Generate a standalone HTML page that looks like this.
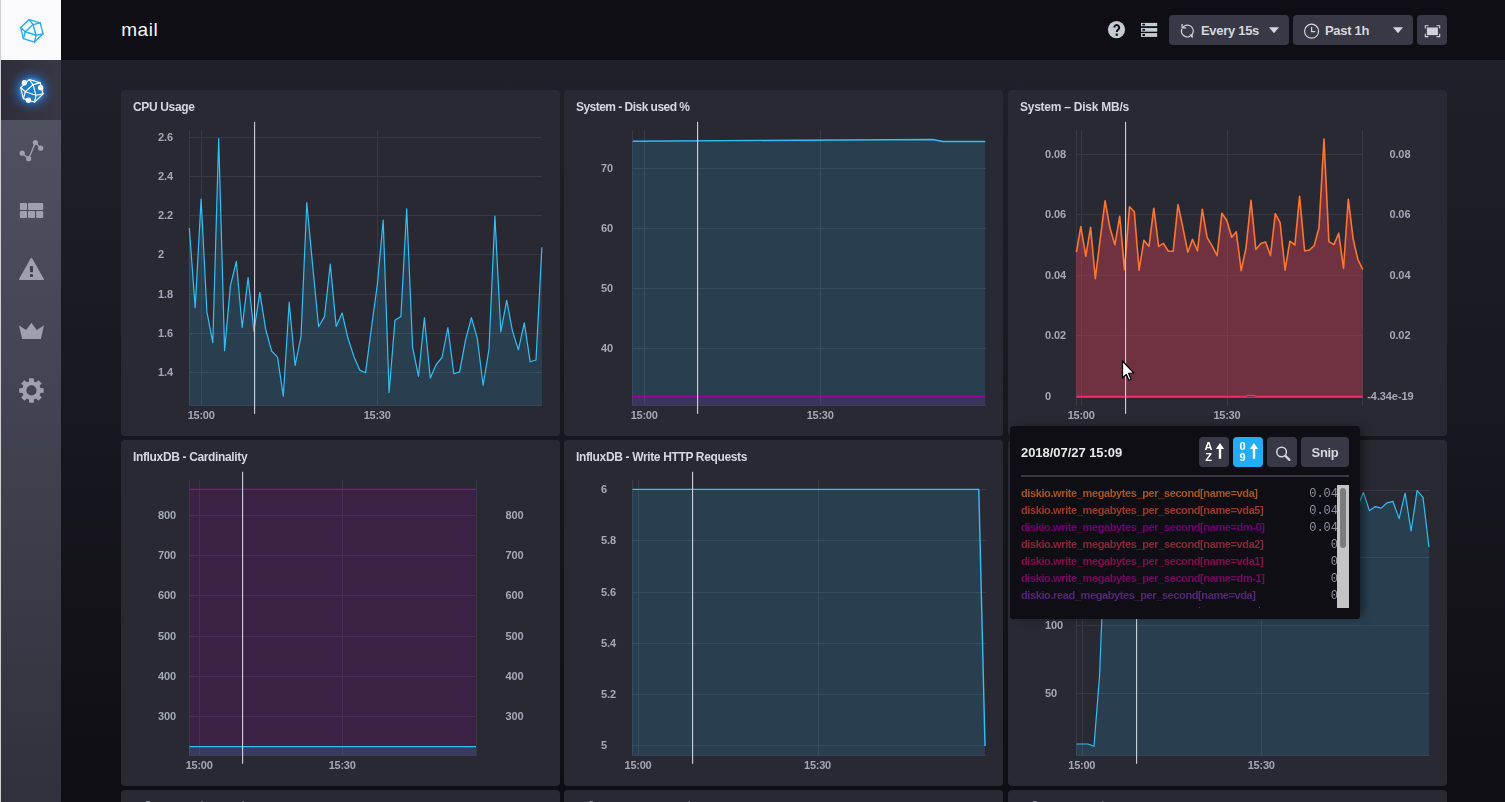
<!DOCTYPE html>
<html><head><meta charset="utf-8"><title>mail</title>
<style>
*{box-sizing:border-box;margin:0;padding:0}
html,body{width:1505px;height:802px;overflow:hidden;background:#0f0e15}
body{font-family:"Liberation Sans",sans-serif;color:#a4a8b6;-webkit-font-smoothing:antialiased}
#app{position:relative;width:1505px;height:802px;overflow:hidden;
  background:linear-gradient(to bottom,#202028 60px,#0f0e15 802px)}
.abs{position:absolute}
#winborder{position:absolute;left:0;top:0;width:1px;height:802px;background:#cfcfd2;z-index:50}
#header{position:absolute;left:61px;top:0;width:1444px;height:60px;background:#0f0e15}
#title{position:absolute;left:121.2px;top:17.6px;font-size:19px;line-height:24px;color:#f6f6f8;font-weight:400;white-space:nowrap;letter-spacing:0.55px}
#sidebar{position:absolute;left:1px;top:0;width:60px;height:802px;
  background:linear-gradient(to bottom,#545667 0px,#31313d 802px)}
#logo{position:absolute;left:0;top:0;width:60px;height:60px;background:#fafafc}
#active{position:absolute;left:0;top:60px;width:60px;height:60px;
  background:linear-gradient(to right,#2e2e3a,#393946)}
.sicon{position:absolute;left:0;width:60px;height:60px}
.btn{position:absolute;top:15px;height:30px;border-radius:4px;background:#383846;color:#d4d7dd;
  font-weight:700;font-size:13px;line-height:31.8px;white-space:nowrap}
.panel{position:absolute;background:#292933;border-radius:4px;overflow:hidden}
.ptitle{will-change:transform;position:absolute;left:12px;top:9px;font-size:12px;line-height:16px;font-weight:700;color:#d4d7dd;white-space:nowrap;letter-spacing:-0.35px}
.yl{position:absolute;font-size:11px;line-height:12px;font-weight:700;color:#a4a8b6;white-space:nowrap;letter-spacing:-0.1px}
.xl{position:absolute;font-size:11px;line-height:12px;font-weight:700;color:#a4a8b6;white-space:nowrap;transform:translateX(-50%);letter-spacing:-0.25px}
svg{position:absolute;left:0;top:0;overflow:visible}
#tip{position:absolute;left:1010px;top:426px;width:350px;height:193px;background:#0f0e15;border-radius:4px;
  box-shadow:6px 0 10px -4px rgba(0,0,0,.6);z-index:20;overflow:hidden}
#tip .ts{position:absolute;left:11px;top:19.3px;font-size:13px;line-height:16px;font-weight:700;color:#e7e8eb;white-space:nowrap;letter-spacing:-0.05px}
#tip .tb{position:absolute;top:11px;width:30px;height:30px;border-radius:4px;background:#383846}
#tip .hr{position:absolute;left:11px;top:49px;width:328px;height:2px;background:#383846}
#tip .row{position:absolute;left:11px;font-size:11px;line-height:17px;margin-top:0.8px;font-weight:700;white-space:nowrap;letter-spacing:-0.39px}
#tip .val{position:absolute;font-family:"Liberation Mono",monospace;font-size:12px;line-height:17px;color:#8e91a1;white-space:nowrap;text-align:right}

</style></head>
<body>
<div id="app">
<div id="sidebar"><div id="logo"></div><div id="active"></div><svg width="60" height="802" viewBox="1 0 60 802"><defs><radialGradient id="glow" cx="50%" cy="50%" r="50%"><stop offset="0" stop-color="#2a8fe0" stop-opacity="1"/><stop offset="0.47" stop-color="#2b8ade" stop-opacity="0.95"/><stop offset="0.57" stop-color="#2c64a6" stop-opacity="0.8"/><stop offset="0.75" stop-color="#2d4c7c" stop-opacity="0.5"/><stop offset="1" stop-color="#2d4470" stop-opacity="0"/></radialGradient></defs><g fill="none" stroke="#22adf6" stroke-width="1.4" stroke-linejoin="round" stroke-linecap="round"><polygon points="29.20,19.56 40.21,22.83 43.07,33.84 34.55,42.06 23.36,38.61 20.73,27.59" fill="none"/><polyline points="20.73,27.59 25.31,31.75 33.05,24.59 29.20,19.56"/><polyline points="33.05,24.59 40.21,22.83"/><polyline points="33.05,24.59 36.01,35.28 25.31,31.75"/><polyline points="43.07,33.84 36.01,35.28 34.55,42.06"/><polyline points="25.31,31.75 23.36,38.61"/></g><circle cx="31.5" cy="90.3" r="23.5" fill="url(#glow)"/><g fill="none" stroke="#ffffff" stroke-width="1.15" stroke-linejoin="round" stroke-linecap="round"><polygon points="29.20,79.56 40.21,82.83 43.07,93.84 34.55,102.06 23.36,98.61 20.73,87.59" fill="#1f7fc6"/><polyline points="20.73,87.59 25.31,91.75 33.05,84.59 29.20,79.56"/><polyline points="33.05,84.59 40.21,82.83"/><polyline points="33.05,84.59 36.01,95.28 25.31,91.75"/><polyline points="43.07,93.84 36.01,95.28 34.55,102.06"/><polyline points="25.31,91.75 23.36,98.61"/></g><circle cx="24.4" cy="82.8" r="2.7" fill="#fff"/><circle cx="40.6" cy="87.8" r="2.7" fill="#fff"/><circle cx="28.4" cy="100.2" r="2.7" fill="#fff"/><polyline points="22.2,153.2 28.7,158.7 35.4,142.5 40.7,148.2" fill="none" stroke="#9da0ae" stroke-width="1.4"/><circle cx="22.2" cy="153.2" r="2.6" fill="#9da0ae"/><circle cx="28.7" cy="158.7" r="2.6" fill="#9da0ae"/><circle cx="35.4" cy="142.5" r="2.6" fill="#9da0ae"/><circle cx="40.7" cy="148.2" r="2.6" fill="#9da0ae"/><rect x="19.9" y="202.9" width="7.10" height="7.05" rx="0.9" fill="#9da0ae"/><rect x="28.0" y="202.9" width="15.20" height="7.05" rx="0.9" fill="#9da0ae"/><rect x="19.9" y="211.0" width="7.10" height="7.00" rx="0.9" fill="#9da0ae"/><rect x="28.0" y="211.0" width="7.00" height="7.00" rx="0.9" fill="#9da0ae"/><rect x="36.1" y="211.0" width="7.10" height="7.00" rx="0.9" fill="#9da0ae"/><path d="M31.45 258.6 L43.2 279.3 L19.7 279.3 Z" fill="#9da0ae" stroke="#9da0ae" stroke-width="1.6" stroke-linejoin="round"/><rect x="29.95" y="266.1" width="3" height="6.1" fill="#3c3d4e"/><rect x="29.95" y="274.2" width="3" height="2.7" fill="#3c3d4e"/><polygon points="19.0,325.5 26.2,329.9 31.45,322.7 36.7,329.9 43.9,325.5 40.9,338.9 22.2,338.9" fill="#9da0ae"/><path d="M28.96 381.49 L29.19 378.26 L33.71 378.26 L33.94 381.49 L36.03 382.36 L38.47 380.23 L41.67 383.43 L39.54 385.87 L40.41 387.96 L43.64 388.19 L43.64 392.71 L40.41 392.94 L39.54 395.03 L41.67 397.47 L38.47 400.67 L36.03 398.54 L33.94 399.41 L33.71 402.64 L29.19 402.64 L28.96 399.41 L26.87 398.54 L24.43 400.67 L21.23 397.47 L23.36 395.03 L22.49 392.94 L19.26 392.71 L19.26 388.19 L22.49 387.96 L23.36 385.87 L21.23 383.43 L24.43 380.23 L26.87 382.36 Z M36.55 390.45 A5.1 5.1 0 1 0 26.35 390.45 A5.1 5.1 0 1 0 36.55 390.45 Z" fill="#9da0ae" fill-rule="evenodd"/></svg></div><div id="winborder"></div><div id="header"></div><div id="title">mail</div><svg width="1505" height="60" viewBox="0 0 1505 60" style="z-index:3"><circle cx="1116.5" cy="29.6" r="8.6" fill="#c6cad3"/><path d="M1114.3 27.6 a2.45 2.45 0 1 1 3.9 1.95 c-1.1 0.8 -1.45 1.3 -1.45 2.4" fill="none" stroke="#0f0e15" stroke-width="2.0"/><rect x="1115.65" y="33.6" width="2.2" height="2.2" fill="#0f0e15"/><rect x="1141" y="22.9" width="16.2" height="3.3" fill="#c6cad3"/><rect x="1142.3" y="23.65" width="2.8" height="1.8" rx="0.6" fill="#0f0e15"/><rect x="1141" y="28.0" width="16.2" height="3.7" fill="#c6cad3"/><rect x="1142.3" y="28.95" width="2.8" height="1.8" rx="0.6" fill="#0f0e15"/><rect x="1141" y="33.1" width="16.2" height="3.8" fill="#c6cad3"/><rect x="1142.3" y="34.10" width="2.8" height="1.8" rx="0.6" fill="#0f0e15"/></svg><div class="btn" style="left:1169px;width:120px"><span class="abs" style="left:32px;letter-spacing:-0.3px">Every 15s</span></div><div class="btn" style="left:1293px;width:120px"><span class="abs" style="left:32px;letter-spacing:-0.3px">Past 1h</span></div><div class="btn" style="left:1417px;width:30px"></div><svg width="1505" height="60" viewBox="0 0 1505 60" style="z-index:4"><g fill="none" stroke="#d4d7dd" stroke-width="1.2"><path d="M1191.57 35.17 A5.9 5.9 0 1 0 1182.88 27.21"/><path d="M1181.86 28.98 A5.9 5.9 0 0 0 1190.17 36.21"/><path d="M1182.1 24.0 V27.8 H1186.2"/></g><path d="M1189.1 34.4 L1192.9 34.4 L1192.6 38.5 Z" fill="#d4d7dd"/><path d="M1269 27.3 L1279 27.3 L1274 33.3 Z" fill="#d4d7dd"/><path d="M1393 27.3 L1403 27.3 L1398 33.3 Z" fill="#d4d7dd"/><circle cx="1311.6" cy="31.2" r="7" fill="none" stroke="#d4d7dd" stroke-width="1.2"/><path d="M1311.6 27 V31.6 H1315.2" fill="none" stroke="#d4d7dd" stroke-width="1.2"/><rect x="1426.9" y="27.5" width="11.0" height="7.6" fill="#cfd2dc"/><g fill="none" stroke="#d4d7dd" stroke-width="1.1"><path d="M1425.3 28.6 V25.8 H1428.4"/><path d="M1436.6 25.8 H1439.7 V28.6"/><path d="M1425.3 33.8 V36.6 H1428.4"/><path d="M1436.6 36.6 H1439.7 V33.8"/></g></svg><div class="panel" style="left:121.0px;top:90px;width:439px;height:346px"><div class="ptitle">CPU Usage</div></div><div class="panel" style="left:564.0px;top:90px;width:439.3px;height:346px"><div class="ptitle" style="letter-spacing:-0.53px">System - Disk used %</div></div><div class="panel" style="left:1008.0px;top:90px;width:439px;height:346px"><div class="ptitle" style="letter-spacing:-0.25px">System – Disk MB/s</div></div><div class="panel" style="left:121.0px;top:440px;width:439px;height:346px"><div class="ptitle">InfluxDB - Cardinality</div></div><div class="panel" style="left:564.0px;top:440px;width:439.3px;height:346px"><div class="ptitle">InfluxDB - Write HTTP Requests</div></div><div class="panel" style="left:1008.0px;top:440px;width:439px;height:346px"></div><div class="panel" style="left:121.0px;top:790px;width:439px;height:346px"></div><div class="panel" style="left:564.0px;top:790px;width:439.3px;height:346px"></div><div class="panel" style="left:1008.0px;top:790px;width:439px;height:346px"></div><svg width="1505" height="802" viewBox="0 0 1505 802" style="z-index:5"><g stroke="#383846" stroke-width="1" shape-rendering="crispEdges"><line x1="189.0" x2="542.0" y1="137.5" y2="137.5"/><line x1="189.0" x2="542.0" y1="176.5" y2="176.5"/><line x1="189.0" x2="542.0" y1="215.5" y2="215.5"/><line x1="189.0" x2="542.0" y1="254.5" y2="254.5"/><line x1="189.0" x2="542.0" y1="294.5" y2="294.5"/><line x1="189.0" x2="542.0" y1="333.5" y2="333.5"/><line x1="189.0" x2="542.0" y1="372.5" y2="372.5"/><line x1="201.5" x2="201.5" y1="130" y2="405.5"/><line x1="377.5" x2="377.5" y1="130" y2="405.5"/><line x1="189.5" x2="189.5" y1="130" y2="405.5"/><line x1="189.0" x2="542.0" y1="405.5" y2="405.5"/></g><path d="M189 405.5 L189 228.0 L189.3 228.0 L195.2 307.6 L201.1 199.1 L206.9 311.9 L212.8 342.6 L218.7 138.7 L224.6 350.6 L230.4 285.9 L236.3 261.3 L242.2 327.5 L248.1 277.6 L253.9 331.1 L259.8 292.4 L265.7 329.3 L271.6 351.0 L277.5 357.1 L283.3 396.2 L289.2 302.2 L295.1 365.4 L301.0 336.5 L306.8 202.7 L312.7 266.0 L318.6 326.7 L324.5 316.6 L330.3 264.2 L336.2 326.4 L342.1 313.0 L348.0 338.3 L353.9 356.4 L359.7 370.1 L365.6 372.7 L371.5 327.5 L377.4 284.0 L383.2 220.1 L389.1 392.5 L395.0 320.2 L400.9 316.6 L406.7 208.9 L412.6 347.3 L418.5 376.3 L424.4 317.7 L430.3 378.1 L436.1 364.7 L442.0 357.5 L447.9 327.5 L453.8 373.7 L459.6 371.9 L465.5 340.1 L471.4 317.7 L477.3 338.3 L483.1 385.3 L489.0 349.2 L494.9 216.1 L500.8 331.8 L506.7 300.3 L512.5 331.1 L518.4 349.9 L524.3 322.8 L530.2 361.8 L536.0 360.0 L541.9 247.2 L541.9 405.5 Z" fill="rgba(49,192,246,0.15)" stroke="none"/><path d="M189.3 228.0 L195.2 307.6 L201.1 199.1 L206.9 311.9 L212.8 342.6 L218.7 138.7 L224.6 350.6 L230.4 285.9 L236.3 261.3 L242.2 327.5 L248.1 277.6 L253.9 331.1 L259.8 292.4 L265.7 329.3 L271.6 351.0 L277.5 357.1 L283.3 396.2 L289.2 302.2 L295.1 365.4 L301.0 336.5 L306.8 202.7 L312.7 266.0 L318.6 326.7 L324.5 316.6 L330.3 264.2 L336.2 326.4 L342.1 313.0 L348.0 338.3 L353.9 356.4 L359.7 370.1 L365.6 372.7 L371.5 327.5 L377.4 284.0 L383.2 220.1 L389.1 392.5 L395.0 320.2 L400.9 316.6 L406.7 208.9 L412.6 347.3 L418.5 376.3 L424.4 317.7 L430.3 378.1 L436.1 364.7 L442.0 357.5 L447.9 327.5 L453.8 373.7 L459.6 371.9 L465.5 340.1 L471.4 317.7 L477.3 338.3 L483.1 385.3 L489.0 349.2 L494.9 216.1 L500.8 331.8 L506.7 300.3 L512.5 331.1 L518.4 349.9 L524.3 322.8 L530.2 361.8 L536.0 360.0 L541.9 247.2" fill="none" stroke="#31c0f6" stroke-width="1.2" stroke-linejoin="round"/><rect x="254" y="121.8" width="1.15" height="292" fill="#c9cdd7"/><g stroke="#383846" stroke-width="1" shape-rendering="crispEdges"><line x1="632.0" x2="986.0" y1="168.5" y2="168.5"/><line x1="632.0" x2="986.0" y1="228.5" y2="228.5"/><line x1="632.0" x2="986.0" y1="288.5" y2="288.5"/><line x1="632.0" x2="986.0" y1="348.5" y2="348.5"/><line x1="644.5" x2="644.5" y1="130" y2="405.5"/><line x1="820.5" x2="820.5" y1="130" y2="405.5"/><line x1="632.5" x2="632.5" y1="130" y2="405.5"/><line x1="632.0" x2="986.0" y1="405.5" y2="405.5"/></g><path d="M632 405.5 L632 141.2 L632.8 141.2 L800.0 140.2 L932.6 139.5 L943.0 141.5 L985.2 141.5 L985.2 405.5 Z" fill="rgba(49,192,246,0.15)" stroke="none"/><path d="M632 405.5 L632 396.6 L632.8 396.6 L985.2 396.6 L985.2 405.5 Z" fill="rgba(165,0,165,0.15)" stroke="none"/><path d="M632.8 141.2 L800.0 140.2 L932.6 139.5 L943.0 141.5 L985.2 141.5" fill="none" stroke="#31c0f6" stroke-width="1.4" stroke-linejoin="round"/><path d="M632.8 396.6 L985.2 396.6" fill="none" stroke="#a500a5" stroke-width="1.3" stroke-linejoin="round"/><rect x="697" y="121.8" width="1.15" height="292" fill="#c9cdd7"/><g stroke="#383846" stroke-width="1" shape-rendering="crispEdges"><line x1="1076.0" x2="1363.0" y1="154.5" y2="154.5"/><line x1="1076.0" x2="1363.0" y1="214.5" y2="214.5"/><line x1="1076.0" x2="1363.0" y1="275.5" y2="275.5"/><line x1="1076.0" x2="1363.0" y1="335.5" y2="335.5"/><line x1="1076.0" x2="1363.0" y1="396.5" y2="396.5"/><line x1="1081.5" x2="1081.5" y1="130" y2="405.5"/><line x1="1227.5" x2="1227.5" y1="130" y2="405.5"/><line x1="1076.5" x2="1076.5" y1="130" y2="405.5"/><line x1="1362.5" x2="1362.5" y1="130" y2="405.5"/></g><path d="M1076 396.5 L1076 252.2 L1076.4 252.2 L1080.8 226.6 L1085.8 256.3 L1090.6 227.4 L1095.3 278.7 L1100.1 239.8 L1105.1 200.9 L1109.9 227.8 L1114.9 244.8 L1119.7 216.2 L1124.5 269.7 L1129.5 206.8 L1134.3 211.8 L1139.1 270.1 L1143.9 240.2 L1149.0 246.4 L1153.8 208.2 L1158.6 246.4 L1163.4 243.4 L1168.4 251.2 L1173.2 251.2 L1178.0 204.5 L1183.0 228.2 L1187.8 252.2 L1192.5 239.4 L1197.5 250.8 L1202.3 209.4 L1207.1 237.4 L1212.1 245.8 L1217.1 255.7 L1221.9 213.2 L1226.9 220.8 L1231.7 237.2 L1236.3 231.8 L1241.2 270.7 L1246.0 247.8 L1251.0 200.3 L1255.8 249.4 L1260.8 243.6 L1265.6 242.0 L1270.5 255.6 L1275.3 213.7 L1280.1 222.7 L1285.1 270.1 L1289.9 241.2 L1294.9 245.0 L1299.6 196.4 L1304.6 251.0 L1309.4 250.0 L1314.2 245.6 L1319.0 227.7 L1324.0 139.0 L1328.9 241.6 L1333.9 244.6 L1338.7 233.2 L1343.5 268.5 L1348.3 199.2 L1353.1 238.6 L1357.9 259.6 L1362.8 269.5 L1362.8 396.5 Z" fill="rgba(199,61,80,0.45)" stroke="none"/><path d="M1076.4 252.2 L1080.8 226.6 L1085.8 256.3 L1090.6 227.4 L1095.3 278.7 L1100.1 239.8 L1105.1 200.9 L1109.9 227.8 L1114.9 244.8 L1119.7 216.2 L1124.5 269.7 L1129.5 206.8 L1134.3 211.8 L1139.1 270.1 L1143.9 240.2 L1149.0 246.4 L1153.8 208.2 L1158.6 246.4 L1163.4 243.4 L1168.4 251.2 L1173.2 251.2 L1178.0 204.5 L1183.0 228.2 L1187.8 252.2 L1192.5 239.4 L1197.5 250.8 L1202.3 209.4 L1207.1 237.4 L1212.1 245.8 L1217.1 255.7 L1221.9 213.2 L1226.9 220.8 L1231.7 237.2 L1236.3 231.8 L1241.2 270.7 L1246.0 247.8 L1251.0 200.3 L1255.8 249.4 L1260.8 243.6 L1265.6 242.0 L1270.5 255.6 L1275.3 213.7 L1280.1 222.7 L1285.1 270.1 L1289.9 241.2 L1294.9 245.0 L1299.6 196.4 L1304.6 251.0 L1309.4 250.0 L1314.2 245.6 L1319.0 227.7 L1324.0 139.0 L1328.9 241.6 L1333.9 244.6 L1338.7 233.2 L1343.5 268.5 L1348.3 199.2 L1353.1 238.6 L1357.9 259.6 L1362.8 269.5" fill="none" stroke="#fc7630" stroke-width="1.6" stroke-linejoin="round"/><path d="M1076.4 397.4 L1362.8 397.4" fill="none" stroke="#a535a8" stroke-width="1.0" stroke-linejoin="round"/><path d="M1076.4 396.4 L1246.0 396.4 L1248.0 395.4 L1254.0 395.4 L1256.0 396.4 L1362.8 396.4" fill="none" stroke="#f02d6b" stroke-width="1.5" stroke-linejoin="round"/><rect x="1125" y="121.8" width="1.15" height="292" fill="#c9cdd7"/><g stroke="#383846" stroke-width="1" shape-rendering="crispEdges"><line x1="189.0" x2="477.0" y1="515.5" y2="515.5"/><line x1="189.0" x2="477.0" y1="555.5" y2="555.5"/><line x1="189.0" x2="477.0" y1="595.5" y2="595.5"/><line x1="189.0" x2="477.0" y1="636.5" y2="636.5"/><line x1="189.0" x2="477.0" y1="676.5" y2="676.5"/><line x1="189.0" x2="477.0" y1="716.5" y2="716.5"/><line x1="199.5" x2="199.5" y1="480" y2="755.5"/><line x1="342.5" x2="342.5" y1="480" y2="755.5"/><line x1="189.5" x2="189.5" y1="480" y2="755.5"/><line x1="189.0" x2="477.0" y1="755.5" y2="755.5"/><line x1="476.5" x2="476.5" y1="480" y2="755.5"/></g><path d="M189 755.5 L189 489.4 L189.6 489.4 L476.0 489.4 L476.0 755.5 Z" fill="rgba(165,0,165,0.15)" stroke="none"/><path d="M189 755.5 L189 746.6 L189.6 746.6 L476.0 746.6 L476.0 755.5 Z" fill="rgba(49,192,246,0.15)" stroke="none"/><path d="M189.6 489.4 L476.0 489.4" fill="none" stroke="#a500a5" stroke-width="1.4" stroke-linejoin="round"/><path d="M189.6 746.6 L476.0 746.6" fill="none" stroke="#31c0f6" stroke-width="1.4" stroke-linejoin="round"/><rect x="242" y="471.8" width="1.15" height="292" fill="#c9cdd7"/><g stroke="#383846" stroke-width="1" shape-rendering="crispEdges"><line x1="632.0" x2="986.0" y1="489.5" y2="489.5"/><line x1="632.0" x2="986.0" y1="540.5" y2="540.5"/><line x1="632.0" x2="986.0" y1="592.5" y2="592.5"/><line x1="632.0" x2="986.0" y1="643.5" y2="643.5"/><line x1="632.0" x2="986.0" y1="694.5" y2="694.5"/><line x1="632.0" x2="986.0" y1="745.5" y2="745.5"/><line x1="638.5" x2="638.5" y1="480" y2="755.5"/><line x1="818.5" x2="818.5" y1="480" y2="755.5"/><line x1="632.5" x2="632.5" y1="480" y2="755.5"/><line x1="632.0" x2="986.0" y1="755.5" y2="755.5"/></g><path d="M632 755.5 L632 489.4 L632.5 489.4 L978.8 489.4 L985.0 746.0 L985.0 755.5 Z" fill="rgba(49,192,246,0.15)" stroke="none"/><path d="M632.5 489.4 L978.8 489.4 L985.0 746.0" fill="none" stroke="#31c0f6" stroke-width="1.4" stroke-linejoin="round"/><rect x="692" y="471.8" width="1.15" height="292" fill="#c9cdd7"/><g stroke="#383846" stroke-width="1" shape-rendering="crispEdges"><line x1="1076.0" x2="1430.0" y1="490.5" y2="490.5"/><line x1="1076.0" x2="1430.0" y1="557.5" y2="557.5"/><line x1="1076.0" x2="1430.0" y1="625.5" y2="625.5"/><line x1="1076.0" x2="1430.0" y1="693.5" y2="693.5"/><line x1="1082.5" x2="1082.5" y1="480" y2="755.5"/><line x1="1261.5" x2="1261.5" y1="480" y2="755.5"/><line x1="1076.5" x2="1076.5" y1="480" y2="755.5"/><line x1="1076.0" x2="1430.0" y1="755.5" y2="755.5"/></g><path d="M1076 755.5 L1076 744.0 L1076.5 744.0 L1087.9 744.0 L1094.0 746.3 L1099.6 675.1 L1101.8 619.0 L1106.0 520.0 L1112.0 498.0 L1118.0 505.0 L1124.0 492.0 L1130.0 510.0 L1136.0 500.0 L1142.0 495.0 L1148.0 512.0 L1154.0 498.0 L1160.0 505.0 L1166.0 494.0 L1172.0 515.0 L1178.0 500.0 L1184.0 497.0 L1190.0 508.0 L1196.0 493.0 L1202.0 511.0 L1208.0 499.0 L1214.0 503.0 L1220.0 492.0 L1226.0 514.0 L1232.0 498.0 L1238.0 506.0 L1244.0 495.0 L1250.0 509.0 L1256.0 499.0 L1262.0 504.0 L1268.0 491.0 L1274.0 513.0 L1280.0 497.0 L1286.0 505.0 L1292.0 494.0 L1298.0 511.0 L1304.0 498.0 L1310.0 503.0 L1316.0 492.0 L1322.0 514.0 L1328.0 499.0 L1334.0 506.0 L1340.0 495.0 L1346.0 509.0 L1352.0 497.0 L1357.4 507.0 L1363.4 492.4 L1369.4 510.6 L1375.4 506.6 L1381.1 508.1 L1387.1 502.8 L1392.9 501.3 L1399.1 518.6 L1405.1 493.1 L1411.1 531.0 L1417.1 490.6 L1423.0 497.4 L1429.0 547.2 L1429.0 755.5 Z" fill="rgba(49,192,246,0.15)" stroke="none"/><path d="M1076.5 744.0 L1087.9 744.0 L1094.0 746.3 L1099.6 675.1 L1101.8 619.0 L1106.0 520.0 L1112.0 498.0 L1118.0 505.0 L1124.0 492.0 L1130.0 510.0 L1136.0 500.0 L1142.0 495.0 L1148.0 512.0 L1154.0 498.0 L1160.0 505.0 L1166.0 494.0 L1172.0 515.0 L1178.0 500.0 L1184.0 497.0 L1190.0 508.0 L1196.0 493.0 L1202.0 511.0 L1208.0 499.0 L1214.0 503.0 L1220.0 492.0 L1226.0 514.0 L1232.0 498.0 L1238.0 506.0 L1244.0 495.0 L1250.0 509.0 L1256.0 499.0 L1262.0 504.0 L1268.0 491.0 L1274.0 513.0 L1280.0 497.0 L1286.0 505.0 L1292.0 494.0 L1298.0 511.0 L1304.0 498.0 L1310.0 503.0 L1316.0 492.0 L1322.0 514.0 L1328.0 499.0 L1334.0 506.0 L1340.0 495.0 L1346.0 509.0 L1352.0 497.0 L1357.4 507.0 L1363.4 492.4 L1369.4 510.6 L1375.4 506.6 L1381.1 508.1 L1387.1 502.8 L1392.9 501.3 L1399.1 518.6 L1405.1 493.1 L1411.1 531.0 L1417.1 490.6 L1423.0 497.4 L1429.0 547.2" fill="none" stroke="#31c0f6" stroke-width="1.2" stroke-linejoin="round"/><rect x="1136" y="471.8" width="1.15" height="292" fill="#c9cdd7"/><rect x="146" y="801" width="4" height="1" fill="#9a9dab" opacity="0.8"/><rect x="201.3" y="801" width="1.3" height="1" fill="#9a9dab" opacity="0.8"/><rect x="242.5" y="801" width="1.3" height="1" fill="#9a9dab" opacity="0.8"/><rect x="589.5" y="801" width="3.6" height="1" fill="#9a9dab" opacity="0.8"/><rect x="688.4" y="801" width="1.3" height="1" fill="#9a9dab" opacity="0.8"/><rect x="1033" y="801" width="3.8" height="1" fill="#9a9dab" opacity="0.8"/><rect x="1102" y="801" width="1.3" height="1" fill="#9a9dab" opacity="0.8"/></svg><div class="abs" style="left:0;top:0;z-index:6;will-change:transform"><div class="yl" style="left:158.0px;top:130.9px">2.6</div><div class="yl" style="left:158.0px;top:170.1px">2.4</div><div class="yl" style="left:158.0px;top:209.2px">2.2</div><div class="yl" style="left:158.0px;top:248.4px">2</div><div class="yl" style="left:158.0px;top:287.6px">1.8</div><div class="yl" style="left:158.0px;top:326.8px">1.6</div><div class="yl" style="left:158.0px;top:365.9px">1.4</div><div class="xl" style="left:201.1px;top:409.2px">15:00</div><div class="xl" style="left:377.1px;top:409.2px">15:30</div><div class="yl" style="left:601.0px;top:161.9px">70</div><div class="yl" style="left:601.0px;top:221.9px">60</div><div class="yl" style="left:601.0px;top:281.9px">50</div><div class="yl" style="left:601.0px;top:341.9px">40</div><div class="xl" style="left:644.1px;top:409.2px">15:00</div><div class="xl" style="left:820.1px;top:409.2px">15:30</div><div class="yl" style="left:1045.0px;top:147.9px">0.08</div><div class="yl" style="left:1045.0px;top:208.3px">0.06</div><div class="yl" style="left:1045.0px;top:268.7px">0.04</div><div class="yl" style="left:1045.0px;top:329.1px">0.02</div><div class="yl" style="left:1045.0px;top:389.5px">0</div><div class="yl" style="left:1389.4px;top:147.9px">0.08</div><div class="yl" style="left:1389.4px;top:208.3px">0.06</div><div class="yl" style="left:1389.4px;top:268.7px">0.04</div><div class="yl" style="left:1389.4px;top:329.1px">0.02</div><div class="yl" style="left:1367.3px;top:389.5px">-4.34e-19</div><div class="xl" style="left:1081.1px;top:409.2px">15:00</div><div class="xl" style="left:1226.9px;top:409.2px">15:30</div><div class="yl" style="left:158.0px;top:509.1px">800</div><div class="yl" style="left:158.0px;top:549.3px">700</div><div class="yl" style="left:158.0px;top:589.4px">600</div><div class="yl" style="left:158.0px;top:629.6px">500</div><div class="yl" style="left:158.0px;top:669.7px">400</div><div class="yl" style="left:158.0px;top:709.9px">300</div><div class="yl" style="left:505.5px;top:509.1px">800</div><div class="yl" style="left:505.5px;top:549.3px">700</div><div class="yl" style="left:505.5px;top:589.4px">600</div><div class="yl" style="left:505.5px;top:629.6px">500</div><div class="yl" style="left:505.5px;top:669.7px">400</div><div class="yl" style="left:505.5px;top:709.9px">300</div><div class="xl" style="left:199.1px;top:759.2px">15:00</div><div class="xl" style="left:342.1px;top:759.2px">15:30</div><div class="yl" style="left:601.0px;top:482.9px">6</div><div class="yl" style="left:601.0px;top:534.2px">5.8</div><div class="yl" style="left:601.0px;top:585.5px">5.6</div><div class="yl" style="left:601.0px;top:636.8px">5.4</div><div class="yl" style="left:601.0px;top:688.1px">5.2</div><div class="yl" style="left:601.0px;top:739.4px">5</div><div class="xl" style="left:638.0px;top:759.2px">15:00</div><div class="xl" style="left:817.5px;top:759.2px">15:30</div><div class="yl" style="left:1045.0px;top:483.5px">200</div><div class="yl" style="left:1045.0px;top:550.7px">150</div><div class="yl" style="left:1045.0px;top:618.9px">100</div><div class="yl" style="left:1045.0px;top:687.1px">50</div><div class="xl" style="left:1081.8px;top:759.2px">15:00</div><div class="xl" style="left:1261.2px;top:759.2px">15:30</div></div><div id="tip"><div class="ts">2018/07/27 15:09</div><div class="tb" style="left:189px"></div><div class="tb" style="left:223px;background:#22adf6"></div><div class="tb" style="left:257px"></div><div class="tb" style="left:291px;width:48px;color:#d4d7dd;font-weight:700;font-size:13px;line-height:32px;text-align:center;letter-spacing:-0.3px">Snip</div><div class="hr"></div><div class="row" style="top:58.4px;color:#a8551d">diskio.write_megabytes_per_second[name=vda]</div><div class="val" style="left:270px;width:58px;top:60.4px">0.04</div><div class="row" style="top:75.4px;color:#9c372c">diskio.write_megabytes_per_second[name=vda5]</div><div class="val" style="left:270px;width:58px;top:77.4px">0.04</div><div class="row" style="top:92.4px;color:#720074">diskio.write_megabytes_per_second[name=dm-0]</div><div class="val" style="left:270px;width:58px;top:94.4px">0.04</div><div class="row" style="top:109.4px;color:#862837">diskio.write_megabytes_per_second[name=vda2]</div><div class="val" style="left:270px;width:58px;top:111.4px">0</div><div class="row" style="top:126.4px;color:#820e4d">diskio.write_megabytes_per_second[name=vda1]</div><div class="val" style="left:270px;width:58px;top:128.4px">0</div><div class="row" style="top:143.4px;color:#780962">diskio.write_megabytes_per_second[name=dm-1]</div><div class="val" style="left:270px;width:58px;top:145.4px">0</div><div class="row" style="top:160.4px;color:#542678">diskio.read_megabytes_per_second[name=vda]</div><div class="val" style="left:270px;width:58px;top:162.4px">0</div><div class="abs" style="left:189.3px;top:181.2px;width:1.2px;height:1px;background:#4a3a90"></div><div class="abs" style="left:248.6px;top:181.2px;width:1.2px;height:1px;background:#4a3a90"></div><div class="abs" style="left:0;top:182.5px;width:350px;height:12px;background:#0f0e15"></div><div class="abs" style="left:327px;top:59.2px;width:12px;height:123px;background:#c4c4c4"></div><div class="abs" style="left:330px;top:62.3px;width:6.4px;height:60px;border-radius:3.2px;background:#7c7c7c"></div><svg width="350" height="193" viewBox="0 0 350 193"><path d="M210 17.0 L214.1 23 H211.2 V32.8 H208.8 V23 H205.9 Z" fill="#fff"/><path d="M244 17.0 L248.1 23 H245.2 V32.8 H242.8 V23 H239.9 Z" fill="#fff"/><circle cx="271.6" cy="26.0" r="4.8" fill="none" stroke="#d4d7dd" stroke-width="1.5"/><path d="M275.3 29.8 L279.4 33.9" stroke="#d4d7dd" stroke-width="2.3" stroke-linecap="round"/></svg><div class="abs" style="left:193.5px;top:15.4px;font-size:11px;line-height:10.7px;font-weight:700;color:#fff;text-align:center;width:10px">A<br>Z</div><div class="abs" style="left:227.5px;top:15.4px;font-size:11px;line-height:10.7px;font-weight:700;color:#fff;text-align:center;width:10px">0<br>9</div></div><svg width="1505" height="802" viewBox="0 0 1505 802" style="z-index:30"><path d="M1122.5 361.0 L1122.5 378.0 L1126.3 374.4 L1128.9 380.2 L1131.2 379.2 L1128.6 373.4 L1133.8 373.0 Z" fill="#fff" stroke="#000" stroke-width="1.25" stroke-linejoin="round"/></svg>
</div>
</body></html>
